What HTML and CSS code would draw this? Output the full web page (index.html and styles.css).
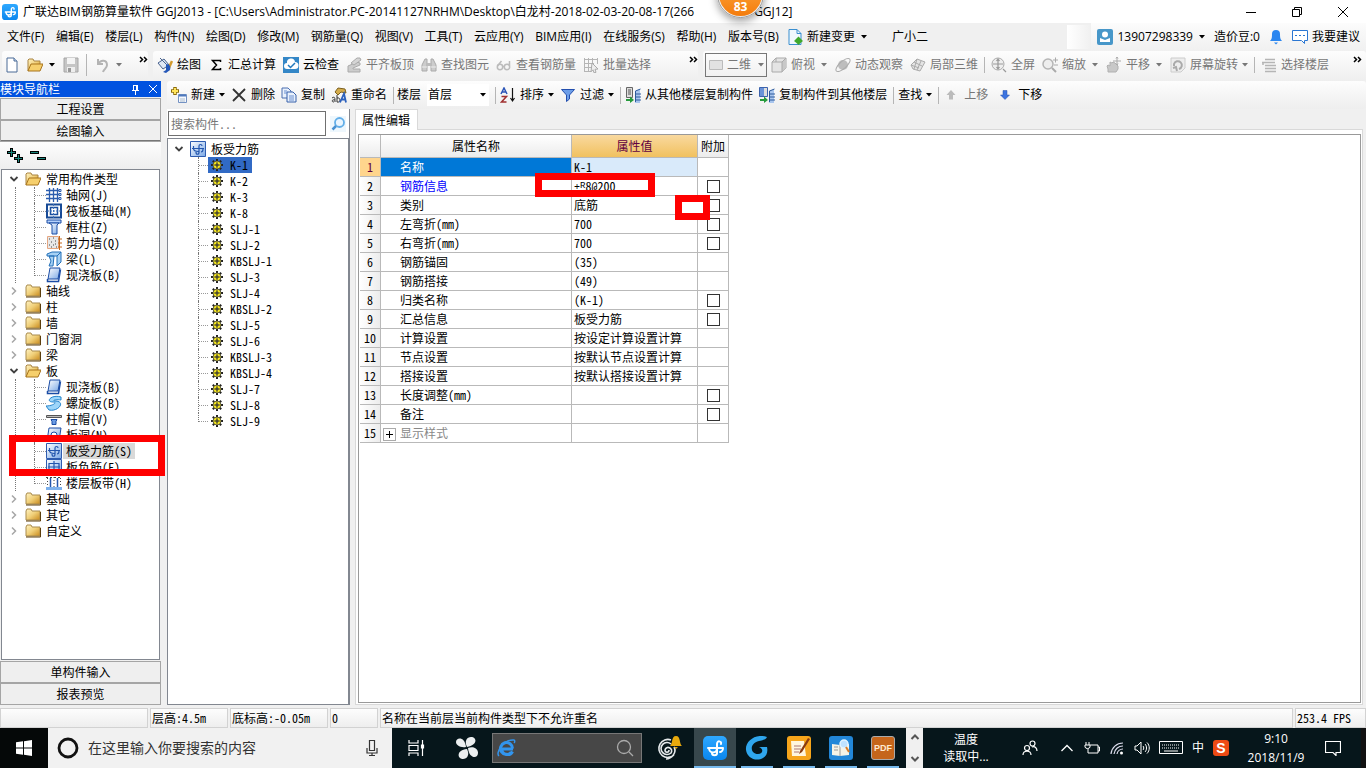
FILE: index.html
```html
<!DOCTYPE html>
<html lang="zh-CN">
<head>
<meta charset="utf-8">
<title>广联达BIM钢筋算量软件 GGJ2013</title>
<link rel="stylesheet" href="styles.css">
</head>
<body>
<svg class="sprite" aria-hidden="true">
  <defs>
    <linearGradient id="gold" x1="0" y1="0" x2="1" y2="1"><stop offset="0" stop-color="#fff3c4"/><stop offset=".5" stop-color="#f0cf78"/><stop offset="1" stop-color="#c98a1c"/></linearGradient>
    <linearGradient id="sky" x1="0" y1="0" x2="1" y2="1"><stop offset="0" stop-color="#fff"/><stop offset="1" stop-color="#7aa8e6"/></linearGradient>
    <linearGradient id="blue" x1="0" y1="0" x2="0" y2="1"><stop offset="0" stop-color="#2ea8ff"/><stop offset="1" stop-color="#0a86ee"/></linearGradient>
  </defs>
  <symbol id="caret" viewBox="0 0 6 4"><path d="M0 0h6L3 3.500z" fill="currentColor"/></symbol>
  <symbol id="more" viewBox="0 0 9 7"><path d="M1 1l2.500 2.500L1 6M5 1l2.500 2.500L5 6" fill="none" stroke="#000" stroke-width="1.500"/></symbol>
  <symbol id="logo" viewBox="0 0 24 24"><rect width="24" height="24" rx="5" fill="url(#blue)"/><path d="M9 17c0 3 5 3 5 0V8c0-4 5-3 4 0M5 12h15M6 12c0 6 8 6 8 0M20 12c0 3-2 4-3 4" fill="none" stroke="#fff" stroke-width="2" stroke-linecap="round"/></symbol>
  <symbol id="newdoc" viewBox="0 0 16 16"><path d="M3 1h7l3 3v11H3z" fill="#fff" stroke="#4b6a96"/><path d="M10 1v3h3" fill="#cfe0f5" stroke="#4b6a96"/></symbol>
  <symbol id="open" viewBox="0 0 16 16"><path d="M1 14V3l1-1h4l1 2h6v3" fill="url(#gold)" stroke="#a98443"/><path d="M1 14l3-7h12l-3 7z" fill="#f6cf6c" stroke="#a8741c"/></symbol>
  <symbol id="folder" viewBox="0 0 16 16"><path d="M1 13V4l1-2h4l1 2h8v9z" fill="url(#gold)" stroke="#a98b4d"/><path d="M1 14h14.500V5" fill="none" stroke="#5c3e0c"/></symbol>
  <symbol id="save" viewBox="0 0 16 16"><path d="M1 1h14v14H1z" fill="#c5c5c5" stroke="#a6a6a6"/><path d="M4 1h8v6H4z" fill="#f4f4f4"/><path d="M4 10h8v5H4z" fill="#eee"/><path d="M5 11h3v4H5z" fill="#999"/></symbol>
  <symbol id="undo" viewBox="0 0 16 16"><path d="M4 2v5h5" fill="none" stroke="#b4b4b4" stroke-width="2"/><path d="M4 7c3-5 9-4 9 1 0 3-3 4-4 7" fill="none" stroke="#b4b4b4" stroke-width="2"/></symbol>
  <symbol id="paint" viewBox="0 0 16 16"><path d="M1 6l6-4 5 6-6 4z" fill="#dfe8f4" stroke="#49628d"/><path d="M3 1l6 6" stroke="#49628d"/><path d="M15 4l-4 9" stroke="#d39a2d" stroke-width="2.500"/><path d="M9 7c4 0 5 3 4 6l-4 3-3-1 3-2z" fill="#2457b8"/></symbol>
  <symbol id="sigma" viewBox="0 0 16 16"><path d="M12.500 5V3.500H4.500l4 4.500-4 4.500h8V11" fill="none" stroke="#000" stroke-width="1.500"/></symbol>
  <symbol id="cloudcheck" viewBox="0 0 16 16"><rect width="16" height="16" fill="#3487c7"/><path d="M4 12a3 3 0 0 1 0-6 4 4 0 0 1 8-1 3.500 3.500 0 0 1 0 7z" fill="#fff"/><path d="M5 8l2.500 2.500L12 6" fill="none" stroke="#2479bc" stroke-width="1.500"/></symbol>
  <symbol id="g-align" viewBox="0 0 16 16"><path d="M2 14V9l9-4 3 1v2l-7 3v1h7v3H2z" fill="#ccc" stroke="#aaa"/><path d="M5 6l6-5h3l1 2-7 5z" fill="#d5d5d5" stroke="#aaa"/></symbol>
  <symbol id="g-find" viewBox="0 0 16 16"><path d="M1 14V8l3-6h2v12zM10 14V2h2l3 6v6z" fill="#ccc" stroke="#aaa"/><path d="M6 6h4v3H6z" fill="#bbb"/><path d="M1 10h5M10 10h5" stroke="#eee"/></symbol>
  <symbol id="g-glasses" viewBox="0 0 16 16"><g fill="none" stroke="#bbb" stroke-width="1.500"><circle cx="4" cy="10" r="2.700"/><circle cx="11" cy="10" r="2.700"/><path d="M1.500 9l4-5M13.500 9V4M6.700 9.500h1.600"/></g></symbol>
  <symbol id="g-batch" viewBox="0 0 16 16"><path d="M1.500 1v13M5.500 1v13M9.500 1v7M1 2.500h14M1 6.500h10M1 10.500h7M1 14.500h7M14.500 1v6" stroke="#b5b5b5" fill="none"/><path d="M9 6l6 6-3 .3 1 3-2 .5-1-3-2 2z" fill="#eee" stroke="#aaa"/></symbol>
  <symbol id="g-plane" viewBox="0 0 16 16"><path d="M1.500 3.500h13v9h-13z" fill="#e2e2e2" stroke="#bbb"/></symbol>
  <symbol id="g-cube" viewBox="0 0 16 16"><path d="M1 5l4-4h10v10l-4 4H1z" fill="#e4e4e4" stroke="#aaa"/><path d="M11 5l4-4v10l-4 4z" fill="#c8c8c8"/><path d="M1 5h10v10M11 5l4-4M5 1v4" fill="none" stroke="#aaa"/></symbol>
  <symbol id="g-orbit" viewBox="0 0 16 16"><circle cx="8" cy="8" r="5" fill="#bdbdbd"/><ellipse cx="8" cy="8" rx="9" ry="3.500" transform="rotate(-42 8 8)" fill="none" stroke="#aaa"/></symbol>
  <symbol id="g-part" viewBox="0 0 16 16"><path d="M1 8l6-6 8 3-5 9-7-2z" fill="#e4e4e4" stroke="#aaa"/><path d="M4 5l8 4M7 2l-3 10M11 4L7 13M1 8l8 3" stroke="#aaa" fill="none"/></symbol>
  <symbol id="g-full" viewBox="0 0 16 16"><circle cx="7" cy="7" r="6" fill="#eee" stroke="#aaa"/><path d="M7 2v10M2 7h10M5.500 4L7 2l1.500 2M5.500 10L7 12l1.500-2M12 12l3 3" fill="none" stroke="#999" stroke-width="1.200"/></symbol>
  <symbol id="g-zoom" viewBox="0 0 16 16"><circle cx="6" cy="7" r="5" fill="#eee" stroke="#b5b5b5" stroke-width="1.500"/><path d="M10 11l4 4" stroke="#aaa" stroke-width="2"/><path d="M11 3h5M13.500.500v5M12 8h4" stroke="#aaa"/></symbol>
  <symbol id="g-pan" viewBox="0 0 16 16"><path d="M2 15v-3L1 9l1-1 2 1V5l2 1 1-1 2 1 2 2 1 1v3l-2 3z" fill="#c8c8c8" stroke="#b0b0b0"/><path d="M11 0v8M7 4h8M10 1.500L11 0l1 1.500M10 6.500L11 8l1-1.500" fill="none" stroke="#aaa"/></symbol>
  <symbol id="g-rotate" viewBox="0 0 16 16"><path d="M1 1h14v10l-4 4H1z" fill="#ededed" stroke="#ccc"/><path d="M4 9V7a4 4 0 1 1 5 5M3 11l3-1 1 4" fill="none" stroke="#aaa" stroke-width="2"/></symbol>
  <symbol id="g-floor" viewBox="0 0 16 16"><path d="M4 2.500h10M1 5.500h13M4 8.500h11M4 11.500h11M4 14.500h11M2 6v2" stroke="#b5b5b5" stroke-width="1.500" fill="none"/></symbol>
  <symbol id="change" viewBox="0 0 16 16"><path d="M2 .500h8l4 4v11H2z" fill="#f1f8fd" stroke="#3a8fd0"/><path d="M10 .500v4h4" fill="none" stroke="#3a8fd0"/><path d="M11.500 7.500l2 2 2.500 2.500-2.500 2-2 2-2-2L7 12l2.500-2.500z" fill="#3fa92c"/></symbol>
  <symbol id="user" viewBox="0 0 16 16"><rect width="16" height="16" rx="2" fill="#4797c9"/><circle cx="8" cy="5.500" r="3" fill="#fff"/><path d="M3 13V9l5 2 5-2v4z" fill="#fff"/></symbol>
  <symbol id="bell" viewBox="0 0 14 16"><path d="M1 12c2-2 2-4 2-7a4 4 0 0 1 8 0c0 3 0 5 2 7z" fill="#2a86f0"/><path d="M5 13.500h4L7 15.500z" fill="#2a86f0"/></symbol>
  <symbol id="chat" viewBox="0 0 16 16"><path d="M.500 1.500h15v10h-3v3l-3-3h-9z" fill="#fff" stroke="#2a76d2"/><path d="M3 6.500h2M7 6.500h2M11 6.500h2" stroke="#2a76d2"/></symbol>
  <symbol id="addnode" viewBox="0 0 16 16"><path d="M4 0v8M0 4h8" stroke="#8c6c08" stroke-width="3.500"/><path d="M4 1v6M1 4h6" stroke="#ffe45c" stroke-width="2"/><path d="M7.500 7.500h8v8h-8z" fill="#f6f9ff" stroke="#7391c2"/><path d="M8 8.500h7" stroke="#4e78bd" stroke-width="2"/><path d="M9 12h5M9 14h5" stroke="#abc"/></symbol>
  <symbol id="del" viewBox="0 0 16 16"><path d="M2 2l12 12M14 2L2 14" stroke="#333" stroke-width="1.800" fill="none"/></symbol>
  <symbol id="copy" viewBox="0 0 16 16"><path d="M1 1h6l3 3v7H1z" fill="#e9f1fc" stroke="#4a6fb0"/><path d="M6 5h6l3 3v7H6z" fill="#e9f1fc" stroke="#3760ab"/><path d="M8 9h5M8 11h5M8 13h5M3 4h3M3 6h3" stroke="#6a8fd0"/></symbol>
  <symbol id="rename" viewBox="0 0 16 16"><path d="M4 5l3-4 7 1 1 4-5-1-3 3z" fill="#d4ac4b" stroke="#7c6020"/><path d="M1 11c3-2 3 0 3 4M4 13c-3-1-4 2-1 2M6 8v7c4 1 4-5 0-4" fill="none" stroke="#333"/><path d="M9 15.500l4-9 2 9M10.500 12.500h4" fill="none" stroke="#2c61bd" stroke-width="1.800"/></symbol>
  <symbol id="sort" viewBox="0 0 16 16"><path d="M1 7l3-6 3 6M2 5h4" fill="none" stroke="#2b54b8" stroke-width="1.500"/><path d="M1.500 9.500h5l-5 5.500h5" fill="none" stroke="#a03030" stroke-width="1.500"/><path d="M12.500 1v12M10.500 11l2 3 2-3" fill="none" stroke="#111" stroke-width="1.200"/></symbol>
  <symbol id="filter" viewBox="0 0 16 16"><path d="M1.500 2.500h13L9.500 8v4l-3 2.500V8z" fill="#6d9ee8" stroke="#234fae"/></symbol>
  <symbol id="fromfloor" viewBox="0 0 16 16"><path d="M1.500.500h6v10h-6z" fill="#ddd" stroke="#666"/><path d="M3 3h3M3 5h3M3 7h3" stroke="#555"/><path d="M1 12h4V9.500l4 3.500-4 3v-2H1z" fill="#259a3b"/><path d="M10 16V4l5-2v14z" fill="#a9c6ee"/><path d="M10.500 15V4l5-2M11 7h5M11 10h5M11 13h5" fill="none" stroke="#2e5a9c"/></symbol>
  <symbol id="tofloor" viewBox="0 0 16 16"><path d="M.500.500h8v9h-8z" fill="#6993d8" stroke="#3c63ad"/><path d="M5 1h3v8H5z" fill="#ddd"/><path d="M1 12h4V9.500l4 3.500-4 3v-2H1z" fill="#259a3b"/><path d="M10 16V4l5-2v14z" fill="#a9c6ee"/><path d="M10.500 15V4l5-2M11 7h5M11 10h5M11 13h5" fill="none" stroke="#2e5a9c"/></symbol>
  <symbol id="up" viewBox="0 0 10 10"><path d="M5 0l4.500 5H7v4.500H3V5H.500z" fill="#bbb"/></symbol>
  <symbol id="down" viewBox="0 0 10 10"><path d="M5 9.500L.500 5H3V.500h4V5h2.500z" fill="#3d74e0" stroke="#2450a8" stroke-width=".500"/></symbol>
  <symbol id="glass" viewBox="0 0 16 16"><rect width="16" height="16" fill="#eef7fd"/><circle cx="9.500" cy="6.500" r="4.500" fill="#e9f5ff" stroke="#62aee8" stroke-width="1.800"/><path d="M6 10l-3.500 3.500" stroke="#4790d2" stroke-width="2.500"/></symbol>
  <symbol id="opened" viewBox="0 0 12 12"><path d="M2.500 4l3.500 3.500L9.500 4" fill="none" stroke="#404040" stroke-width="1.800"/></symbol>
  <symbol id="closed" viewBox="0 0 12 12"><path d="M4 2.500L7.500 6 4 9.500" fill="none" stroke="#a6a6a6" stroke-width="1.500"/></symbol>
  <symbol id="plusplus" viewBox="0 0 16 16"><path d="M4.500 0v9M0 4.500h9M11.500 6v9M7 10.500h9" stroke="#000" stroke-width="3"/><path d="M4.500 1v7M1 4.500h7M11.500 7v7M8 10.500h7" stroke="#19847a"/></symbol>
  <symbol id="minusminus" viewBox="0 0 16 16"><path d="M0 4.500h9M7 10.500h9" stroke="#000" stroke-width="3"/><path d="M1 4.500h7M8 10.500h7" stroke="#19847a"/></symbol>
  <symbol id="t-axis" viewBox="0 0 16 16"><path d="M3.500 1v14M7.500 1v14M11.500 1v14M0 3.500h13M0 7.500h13M0 11.500h13" stroke="#2a5cae" stroke-width="1.300"/><path d="M13 2.500h2v2h-2zM13 6.500h2v2h-2zM13 10.500h2v2h-2z" fill="#fff" stroke="#2a5cae"/></symbol>
  <symbol id="t-raft" viewBox="0 0 16 16"><path d="M1 1.500h14v13H1z" fill="#fff" stroke="#174a96" stroke-width="2"/><path d="M4.500 4.500h7v7h-7z" fill="#fff" stroke="#1a4f9f" stroke-width="1.500"/><path d="M7.500 1v14M1 8h14" stroke="#3f70b8" stroke-dasharray="2 1"/></symbol>
  <symbol id="t-col" viewBox="0 0 16 16"><path d="M1 1h14v3H1z" fill="#b5d1fb" stroke="#1d4ea6"/><path d="M3 4h10l-2 2v9H6V6z" fill="url(#sky)" stroke="#1d4ea6"/></symbol>
  <symbol id="t-wall" viewBox="0 0 16 16"><path d="M1.500 1.500h11v12h-11z" fill="#e8e8e8" stroke="#e4a681"/><path d="M3 4h1M7 3h1M5 7h1M9 6h1M3 10h1M7 10h1M5 12h1M10 12h1M9 9h1" stroke="#444"/><path d="M13.500 1v14M12 4h4M12 8h4M12 12h4" stroke="#c4691d"/></symbol>
  <symbol id="t-beam" viewBox="0 0 16 16"><path d="M1 3l5-2h9l-4 4H1zM3 5h5l-1 10H3l2-5zM11 5l4-4v10l-4 4z" fill="#a7d2f5" stroke="#2470b8"/></symbol>
  <symbol id="t-slab" viewBox="0 0 16 16"><path d="M4 1h10l-2 11H2z" fill="url(#sky)" stroke="#1b4ca5"/><path d="M1.500 12v2.500h11l2-12" fill="none" stroke="#1b4ca5" stroke-width="1.500"/></symbol>
  <symbol id="t-spiral" viewBox="0 0 16 16"><path d="M15 2C5-1-1 7 7 7c5 0 0 4-7 4l3 4c9 2 17-8 7-9-5 0-1-2 5-1z" fill="#9dd6fa" stroke="#2383cb"/></symbol>
  <symbol id="t-cap" viewBox="0 0 16 16"><path d="M.500 4.500h15v2H.500z" fill="#bbb" stroke="#555"/><path d="M5 8.500h6l-1 2v3H6v-3z" fill="#6b9ce4" stroke="#1b4ca5"/></symbol>
  <symbol id="t-hole" viewBox="0 0 16 16"><path d="M3 1h12l-2 13H1z" fill="url(#sky)" stroke="#1b4ca5"/><circle cx="8" cy="8" r="3" fill="#fff" stroke="#1b4ca5"/></symbol>
  <symbol id="t-rebar" viewBox="0 0 16 16"><path d="M.500.500h15v15H.500z" fill="url(#sky)" stroke="#2e5cb0"/><path d="M2 7.500h12M6 11c0 3 3 3 3 0V5c0-2 3-2 3 0M3.500 5v2.500c0 3 3 3 5 3M13 8c0 2-1 3-2 3" fill="none" stroke="#2356ae" stroke-width="1.200"/></symbol>
  <symbol id="t-neg" viewBox="0 0 16 16"><path d="M.500.500h15v15H.500z" fill="url(#sky)" stroke="#2e5cb0"/><path d="M2 8h12M3 4.500h10v7H3zM8 2v12" fill="none" stroke="#2356ae" stroke-width="1.200"/></symbol>
  <symbol id="t-strip" viewBox="0 0 16 16"><path d="M0 12h16v3H0z" fill="#7db1ed"/><path d="M0 2.500h16" stroke="#444" stroke-dasharray="2 2"/><path d="M4.500 3v9M11.500 3v9" stroke="#2356ae" stroke-width="1.500"/><path d="M8 2v10M1.500 3v9M14.500 3v9" stroke="#444" stroke-dasharray="1 2"/></symbol>
  <symbol id="gear" viewBox="0 0 12 12"><path d="M6 0v12M0 6h12M1.800 1.800l8.400 8.400M10.200 1.800l-8.400 8.400" stroke="#222" stroke-width="2"/><circle cx="6" cy="6" r="4" fill="#f3e51c" stroke="#444" stroke-width=".800"/><path d="M6 3v6M3 6h6M5 5h2v2H5z" fill="#f3e51c" stroke="#333" stroke-width=".800"/></symbol>
</svg>

<header class="title-bar">
  <svg class="i16"><use href="#logo"/></svg>
  <h1 class="title-text"><span>广联达BIM钢筋算量软件 GGJ2013 - [C:\Users\Administrator.PC-20141127NRHM\Desktop\白龙村-2018-02-03-20-08-17(266</span><span>GGJ12]</span></h1>
  <div class="window-buttons">
    <button aria-label="最小化"><svg class="i12" viewBox="0 0 12 12"><path d="M1 6.500h10" stroke="#000"/></svg></button>
    <button aria-label="还原"><svg class="i12" viewBox="0 0 12 12"><path d="M1.500 3.500h7v7h-7zM3.500 3V1.500h7v7H9" fill="none" stroke="#000"/></svg></button>
    <button aria-label="关闭"><svg class="i12" viewBox="0 0 12 12"><path d="M1 1l10 10M11 1L1 11" stroke="#000"/></svg></button>
  </div>
  <div class="score-ball">83</div>
</header>

<nav class="menu-bar">
  <div class="menus">
    <button>文件(F)</button><button>编辑(E)</button><button>楼层(L)</button><button>构件(N)</button><button>绘图(D)</button><button>修改(M)</button><button>钢筋量(Q)</button><button>视图(V)</button><button>工具(T)</button><button>云应用(Y)</button><button>BIM应用(I)</button><button>在线服务(S)</button><button>帮助(H)</button><button>版本号(B)</button>
  </div>
  <button class="tool change"><svg class="i16"><use href="#change"/></svg>新建变更<svg class="caret"><use href="#caret"/></svg></button>
  <button class="assistant">广小二</button>
  <div class="account-edge"></div>
  <div class="account">
    <button class="tool"><svg class="i16"><use href="#user"/></svg>13907298339<svg class="caret"><use href="#caret"/></svg></button>
    <span>造价豆:0</span>
    <button class="tool" aria-label="通知"><svg class="i16"><use href="#bell"/></svg></button>
    <button class="tool feedback"><svg class="i16"><use href="#chat"/></svg>我要建议</button>
  </div>
</nav>

<div class="toolbar-row">
  <div class="band band-file">
    <button class="tool" aria-label="新建"><svg class="i16"><use href="#newdoc"/></svg></button>
    <button class="tool" aria-label="打开"><svg class="i16"><use href="#open"/></svg><svg class="caret"><use href="#caret"/></svg></button>
    <button class="tool" aria-label="保存"><svg class="i16"><use href="#save"/></svg></button>
    <span class="sep"></span>
    <button class="tool off" aria-label="撤销"><svg class="i16"><use href="#undo"/></svg><svg class="caret"><use href="#caret"/></svg></button>
    <svg class="more"><use href="#more"/></svg>
  </div>
  <div class="band band-draw">
    <button class="tool"><svg class="i16"><use href="#paint"/></svg>绘图</button>
    <button class="tool"><svg class="i16"><use href="#sigma"/></svg>汇总计算</button>
    <button class="tool"><svg class="i16"><use href="#cloudcheck"/></svg>云检查</button>
    <button class="tool off"><svg class="i16"><use href="#g-align"/></svg>平齐板顶</button>
    <button class="tool off"><svg class="i16"><use href="#g-find"/></svg>查找图元</button>
    <button class="tool off"><svg class="i16"><use href="#g-glasses"/></svg>查看钢筋量</button>
    <button class="tool off"><svg class="i16"><use href="#g-batch"/></svg>批量选择</button>
    <svg class="more"><use href="#more"/></svg>
  </div>
  <div class="band band-view">
    <button class="tool off boxed"><svg class="i16"><use href="#g-plane"/></svg>二维<svg class="caret"><use href="#caret"/></svg></button>
    <button class="tool off"><svg class="i16"><use href="#g-cube"/></svg>俯视<svg class="caret"><use href="#caret"/></svg></button>
    <button class="tool off"><svg class="i16"><use href="#g-orbit"/></svg>动态观察</button>
    <button class="tool off"><svg class="i16"><use href="#g-part"/></svg>局部三维</button>
    <span class="sep"></span>
    <button class="tool off"><svg class="i16"><use href="#g-full"/></svg>全屏</button>
    <button class="tool off"><svg class="i16"><use href="#g-zoom"/></svg>缩放<svg class="caret"><use href="#caret"/></svg></button>
    <button class="tool off"><svg class="i16"><use href="#g-pan"/></svg>平移<svg class="caret"><use href="#caret"/></svg></button>
    <button class="tool off tight"><svg class="i16"><use href="#g-rotate"/></svg>屏幕旋转<svg class="caret"><use href="#caret"/></svg></button>
    <span class="sep"></span>
    <button class="tool off"><svg class="i16"><use href="#g-floor"/></svg>选择楼层</button>
    <svg class="more"><use href="#more"/></svg>
  </div>
</div>

<main class="workspace">
  <aside class="nav-panel">
    <div class="nav-head"><h2>模块导航栏</h2>
      <button aria-label="固定"><svg class="i12" viewBox="0 0 12 12"><path d="M4 2.500h5M4.500 2v5M8.500 2v5M7.500 2v5M3 7.500h7M6.500 8v4" stroke="#fff" fill="none"/></svg></button>
      <button aria-label="关闭"><svg class="i12" viewBox="0 0 12 12"><path d="M2 2l8 8M10 2l-8 8" stroke="#fff"/></svg></button>
    </div>
    <button class="section">工程设置</button>
    <button class="section pressed">绘图输入</button>
    <div class="nav-tools">
      <button aria-label="展开"><svg class="i16"><use href="#plusplus"/></svg></button>
      <button aria-label="折叠"><svg class="i16"><use href="#minusminus"/></svg></button>
    </div>
    <div class="nav-tree">
      <ul class="tree">
        <li><div class="node"><svg class="tw"><use href="#opened"/></svg><svg class="i16"><use href="#open"/></svg>常用构件类型</div>
          <ul class="sub">
            <li><svg class="i16"><use href="#t-axis"/></svg><span>轴网(J)</span></li>
            <li><svg class="i16"><use href="#t-raft"/></svg><span>筏板基础(M)</span></li>
            <li><svg class="i16"><use href="#t-col"/></svg><span>框柱(Z)</span></li>
            <li><svg class="i16"><use href="#t-wall"/></svg><span>剪力墙(Q)</span></li>
            <li><svg class="i16"><use href="#t-beam"/></svg><span>梁(L)</span></li>
            <li><svg class="i16"><use href="#t-slab"/></svg><span>现浇板(B)</span></li>
          </ul></li>
        <li><div class="node"><svg class="tw"><use href="#closed"/></svg><svg class="i16"><use href="#folder"/></svg>轴线</div></li>
        <li><div class="node"><svg class="tw"><use href="#closed"/></svg><svg class="i16"><use href="#folder"/></svg>柱</div></li>
        <li><div class="node"><svg class="tw"><use href="#closed"/></svg><svg class="i16"><use href="#folder"/></svg>墙</div></li>
        <li><div class="node"><svg class="tw"><use href="#closed"/></svg><svg class="i16"><use href="#folder"/></svg>门窗洞</div></li>
        <li><div class="node"><svg class="tw"><use href="#closed"/></svg><svg class="i16"><use href="#folder"/></svg>梁</div></li>
        <li><div class="node"><svg class="tw"><use href="#opened"/></svg><svg class="i16"><use href="#open"/></svg>板</div>
          <ul class="sub">
            <li><svg class="i16"><use href="#t-slab"/></svg><span>现浇板(B)</span></li>
            <li><svg class="i16"><use href="#t-spiral"/></svg><span>螺旋板(B)</span></li>
            <li><svg class="i16"><use href="#t-cap"/></svg><span>柱帽(V)</span></li>
            <li><svg class="i16"><use href="#t-hole"/></svg><span>板洞(N)</span></li>
            <li class="current"><svg class="i16"><use href="#t-rebar"/></svg><span>板受力筋(S)</span><i class="mark mark-nav"></i></li>
            <li><svg class="i16"><use href="#t-neg"/></svg><span>板负筋(F)</span></li>
            <li><svg class="i16"><use href="#t-strip"/></svg><span>楼层板带(H)</span></li>
          </ul></li>
        <li><div class="node"><svg class="tw"><use href="#closed"/></svg><svg class="i16"><use href="#folder"/></svg>基础</div></li>
        <li><div class="node"><svg class="tw"><use href="#closed"/></svg><svg class="i16"><use href="#folder"/></svg>其它</div></li>
        <li><div class="node"><svg class="tw"><use href="#closed"/></svg><svg class="i16"><use href="#folder"/></svg>自定义</div></li>
      </ul>
    </div>
    <button class="section">单构件输入</button>
    <button class="section">报表预览</button>
  </aside>

  <section class="editor">
    <div class="band band-edit">
      <button class="tool tight"><svg class="i16"><use href="#addnode"/></svg>新建<svg class="caret"><use href="#caret"/></svg></button>
      <button class="tool"><svg class="i16"><use href="#del"/></svg>删除</button>
      <button class="tool"><svg class="i16"><use href="#copy"/></svg>复制</button>
      <button class="tool"><svg class="i16"><use href="#rename"/></svg>重命名</button>
      <span class="sep"></span>
      <label class="floor" for="floor">楼层</label>
      <span class="combo"><select id="floor"><option>首层</option></select><svg class="caret"><use href="#caret"/></svg></span>
      <span class="sep"></span>
      <button class="tool tight"><svg class="i16"><use href="#sort"/></svg>排序<svg class="caret"><use href="#caret"/></svg></button>
      <button class="tool tight"><svg class="i16"><use href="#filter"/></svg>过滤<svg class="caret"><use href="#caret"/></svg></button>
      <span class="sep"></span>
      <button class="tool"><svg class="i16"><use href="#fromfloor"/></svg>从其他楼层复制构件</button>
      <button class="tool"><svg class="i16"><use href="#tofloor"/></svg>复制构件到其他楼层</button>
      <span class="sep"></span>
      <button class="tool tight">查找<svg class="caret"><use href="#caret"/></svg></button>
      <span class="sep"></span>
      <button class="tool off move"><svg class="i10"><use href="#up"/></svg>上移</button>
      <button class="tool move"><svg class="i10"><use href="#down"/></svg>下移</button>
    </div>
    <div class="panes">
      <div class="parts">
        <form class="search"><input type="text" aria-label="搜索构件" placeholder="搜索构件..."><button type="button" aria-label="搜索"><svg class="i16"><use href="#glass"/></svg></button></form>
        <div class="part-tree">
          <div class="node"><svg class="tw"><use href="#opened"/></svg><svg class="i16"><use href="#t-rebar"/></svg>板受力筋</div>
          <ul class="sub">
            <li class="selected"><b><svg class="i12"><use href="#gear"/></svg>K-1</b></li>
            <li><b><svg class="i12"><use href="#gear"/></svg>K-2</b></li>
            <li><b><svg class="i12"><use href="#gear"/></svg>K-3</b></li>
            <li><b><svg class="i12"><use href="#gear"/></svg>K-8</b></li>
            <li><b><svg class="i12"><use href="#gear"/></svg>SLJ-1</b></li>
            <li><b><svg class="i12"><use href="#gear"/></svg>SLJ-2</b></li>
            <li><b><svg class="i12"><use href="#gear"/></svg>KBSLJ-1</b></li>
            <li><b><svg class="i12"><use href="#gear"/></svg>SLJ-3</b></li>
            <li><b><svg class="i12"><use href="#gear"/></svg>SLJ-4</b></li>
            <li><b><svg class="i12"><use href="#gear"/></svg>KBSLJ-2</b></li>
            <li><b><svg class="i12"><use href="#gear"/></svg>SLJ-5</b></li>
            <li><b><svg class="i12"><use href="#gear"/></svg>SLJ-6</b></li>
            <li><b><svg class="i12"><use href="#gear"/></svg>KBSLJ-3</b></li>
            <li><b><svg class="i12"><use href="#gear"/></svg>KBSLJ-4</b></li>
            <li><b><svg class="i12"><use href="#gear"/></svg>SLJ-7</b></li>
            <li><b><svg class="i12"><use href="#gear"/></svg>SLJ-8</b></li>
            <li><b><svg class="i12"><use href="#gear"/></svg>SLJ-9</b></li>
          </ul>
        </div>
      </div>
      <div class="props">
        <button class="tab">属性编辑</button>
        <div class="props-outer"><div class="props-inner">
          <table class="grid">
            <colgroup><col class="c-no"><col class="c-name"><col class="c-value"><col class="c-add"></colgroup>
            <thead><tr><th></th><th>属性名称</th><th class="hot">属性值</th><th>附加</th></tr></thead>
            <tbody>
              <tr class="active"><th>1</th><td>名称</td><td>K-1</td><td></td></tr>
              <tr><th>2</th><td class="link">钢筋信息</td><td class="anchor"><span class="steel">±<sup>R</sup></span>8@200<i class="mark mark-info"></i></td><td><input type="checkbox" aria-label="附加 钢筋信息"></td></tr>
              <tr><th>3</th><td>类别</td><td class="anchor">底筋<i class="mark mark-drop"></i></td><td><input type="checkbox" aria-label="附加 类别"></td></tr>
              <tr><th>4</th><td>左弯折(mm)</td><td>700</td><td><input type="checkbox" aria-label="附加 左弯折"></td></tr>
              <tr><th>5</th><td>右弯折(mm)</td><td>700</td><td><input type="checkbox" aria-label="附加 右弯折"></td></tr>
              <tr><th>6</th><td>钢筋锚固</td><td>(35)</td><td></td></tr>
              <tr><th>7</th><td>钢筋搭接</td><td>(49)</td><td></td></tr>
              <tr><th>8</th><td>归类名称</td><td>(K-1)</td><td><input type="checkbox" aria-label="附加 归类名称"></td></tr>
              <tr><th>9</th><td>汇总信息</td><td>板受力筋</td><td><input type="checkbox" aria-label="附加 汇总信息"></td></tr>
              <tr><th>10</th><td>计算设置</td><td>按设定计算设置计算</td><td></td></tr>
              <tr><th>11</th><td>节点设置</td><td>按默认节点设置计算</td><td></td></tr>
              <tr><th>12</th><td>搭接设置</td><td>按默认搭接设置计算</td><td></td></tr>
              <tr><th>13</th><td>长度调整(mm)</td><td></td><td><input type="checkbox" aria-label="附加 长度调整"></td></tr>
              <tr><th>14</th><td>备注</td><td></td><td><input type="checkbox" aria-label="附加 备注"></td></tr>
              <tr><th>15</th><td class="group"><button aria-label="展开显示样式"><svg viewBox="0 0 11 11"><path d="M2 5.500h7M5.500 2v7" stroke="#000"/></svg></button>显示样式</td><td></td><td></td></tr>
            </tbody>
          </table>
        </div></div>
      </div>
    </div>
  </section>
</main>

<footer class="status">
  <span class="s-mode"></span><span class="s-height">层高:4.5m</span><span class="s-base">底标高:-0.05m</span><span class="s-count">0</span><span class="s-msg">名称在当前层当前构件类型下不允许重名</span><span class="s-fps">253.4 FPS</span>
</footer>

<div class="taskbar">
  <button class="start" aria-label="开始"><svg class="i16" viewBox="0 0 16 16"><path d="M0 2.300L7 1.300v6.200H0zM8 1.200L16 0v7.500H8zM0 8.500h7v6.200l-7-1zM8 8.500h8V16l-8-1.200z" fill="#fff"/></svg></button>
  <label class="cortana"><svg class="i24" viewBox="0 0 24 24"><circle cx="12" cy="12" r="9" fill="none" stroke="#111" stroke-width="2.800"/></svg><input type="text" placeholder="在这里输入你要搜索的内容" aria-label="搜索"><svg class="i16" viewBox="0 0 16 16"><path d="M5.500.500h5v10h-5zM3 8v5h10V8M8 13v3M5 15.500h6" fill="none" stroke="#333" stroke-width="1.200"/></svg></label>
  <div class="apps">
    <button class="app" aria-label="任务视图"><svg class="i20" viewBox="0 0 20 20"><path d="M3 2v3h9V2M3 18v-3h9v3M3 7.500h9v5H3zM16.500 2v16M15.500 7h2v3h-2z" fill="none" stroke="#fff" stroke-width="1.200"/></svg></button>
    <button class="app fan" aria-label="风扇"><svg class="i24" viewBox="0 0 24 24"><g fill="#eceff0"><path d="M11 11C5 12 1 9 1 6c0-5 9-6 10 5z"/><path d="M12 11c-3-6 0-10 4-10 6 0 7 8-4 10z"/><path d="M13 12c6-2 10 1 10 5 0 6-9 6-10-5z"/><path d="M12 13c3 6 0 10-4 10-6 0-7-9 4-10z"/></g></svg></button>
    <div class="ie"><svg class="i20" viewBox="0 0 20 20"><path d="M17 11H6M6 11a5.500 5 0 0 0 10.500 2.500M16.500 10.500a6 6 0 1 0-1.500 4" fill="none" stroke="#3295ee" stroke-width="3"/><path d="M3 18C-1 15 8 1 18 2c1 0 1 2 0 3" fill="none" stroke="#3295ee" stroke-width="1.500"/></svg><input type="text" aria-label="浏览器搜索"><svg class="i20" viewBox="0 0 20 20"><circle cx="9" cy="9" r="6.500" fill="none" stroke="#aaa" stroke-width="1.300"/><path d="M14 14l4 4" stroke="#aaa" stroke-width="1.300"/></svg></div>
    <button class="app" aria-label="提醒"><svg class="i28" viewBox="0 0 28 28"><path d="M16 6A9 9 0 1 0 19 21M16 10a6 6 0 1 0 0 9c3-5-5-8-6-3 0 3 4 3 4 0M19 13c3 5-2 12-8 12" fill="none" stroke="#e6eaec" stroke-width="1.600"/><path d="M15 12c3-2 1-10 6-10s3 8 6 10zM19 13h4l-2 2z" fill="#e8a90c"/></svg></button>
    <button class="app run now" aria-label="广联达"><svg class="i24"><use href="#logo"/></svg></button>
    <button class="app run" aria-label="浏览器"><svg class="i24" viewBox="0 0 24 24"><path d="M22 1C11-3 0 5 1 14c1 8 10 12 17 8 4-2 5-7 4-11h-8c5 2 4 7-1 7-8 0-9-11 1-13 3-1 7-1 8-4z" fill="#2fa6ed"/></svg></button>
    <button class="app run" aria-label="便笺"><svg class="i24" viewBox="0 0 24 24"><rect width="24" height="24" rx="3" fill="#f6a51b"/><path d="M4 5h13l2 15H5z" fill="#fff6dd"/><path d="M7 10h7M7 13h7M7 16h5" stroke="#a77"/><path d="M21 2l-8 13-1 3 3-2 8-13z" fill="#8a3b10"/></svg></button>
    <button class="app run" aria-label="阅读"><svg class="i24" viewBox="0 0 24 24"><rect width="24" height="24" rx="3" fill="#2287d8"/><path d="M3 8l8 1 9-1v11l-9 1-8-1z" fill="#f6f3e6"/><path d="M11 9v11M5 11h4M5 14h4" stroke="#999"/><circle cx="15" cy="8" r="4" fill="#bfe2ff" stroke="#e2f4ff" stroke-width="1.500"/><path d="M17 11l3 5" stroke="#d77b28" stroke-width="2"/></svg></button>
    <button class="app run" aria-label="PDF"><span class="pdf">PDF</span></button>
  </div>
  <div class="scroller"><svg class="i10"><path d="M1.500 7L5 3.500 8.500 7" fill="none" stroke="#555" stroke-width="2"/></svg><svg class="i10"><path d="M1.500 3L5 6.500 8.500 3" fill="none" stroke="#555" stroke-width="2"/></svg></div>
  <div class="temp"><span>温度</span><span>读取中...</span></div>
  <div class="tray">
    <svg class="i16 people" viewBox="0 0 16 16"><g fill="none" stroke="#fff" stroke-width="1.200"><circle cx="10.500" cy="3.500" r="2.500"/><circle cx="5" cy="8" r="2.500"/><path d="M1 15c0-5 8-5 8 0M10 7c3-1 5 1 5 4"/></g></svg>
    <svg class="i16" viewBox="0 0 16 16"><path d="M2.500 11L8 5.500l5.500 5.500" fill="none" stroke="#fff" stroke-width="1.300"/></svg>
    <svg class="i16" viewBox="0 0 16 16"><path d="M6 5h8v8H4V9M14 7h1.500v4H14M2 2v3M5 2v3M1 5h5v2c0 2-5 2-5 0z" fill="none" stroke="#fff"/></svg>
    <svg class="i16" viewBox="0 0 16 16"><path d="M2 14A12 12 0 0 1 14 3M5 14a9 9 0 0 1 9-8M8 14a6 6 0 0 1 6-5" fill="none" stroke="#dde" stroke-width="1.200"/><circle cx="12.500" cy="13" r="1.500" fill="#fff"/></svg>
    <svg class="i16" viewBox="0 0 16 16"><path d="M1 6h2l4-4v12l-4-4H1zM9 6c1 1 1 3 0 4M11 4c2 2 2 6 0 8M13 2.500c3 3 3 8 0 11" fill="none" stroke="#fff"/></svg>
    <svg class="keyboard" viewBox="0 0 24 14"><path d="M.500.500h23v12H.500z" fill="none" stroke="#fff"/><path d="M3 4h18M3 7h18" stroke="#fff" stroke-dasharray="1 1"/><path d="M5 10h14" stroke="#fff"/></svg>
    <span>中</span>
    <span class="sogou">S</span>
  </div>
  <div class="clock"><span>9:10</span><span>2018/11/9</span></div>
  <button class="notice" aria-label="操作中心"><svg class="i16" viewBox="0 0 16 16"><path d="M.500 1.500h15v11H11V15.500L8 12.500H.500z" fill="none" stroke="#fff" stroke-width="1.200"/></svg></button>
</div>
</body>
</html>
```

FILE: styles.css
```css
* { box-sizing: border-box; }
html, body { height: 100%; }
body {
  margin: 0;
  display: flex;
  flex-direction: column;
  min-height: 100vh;
  overflow: hidden;
  background: #f0f0f0;
  color: #000;
  font: 12px/16px "Open Sans", "Noto Sans CJK SC", sans-serif;
  white-space: nowrap;
}
button, input, select { font: inherit; color: inherit; margin: 0; padding: 0; border: 0; background: none; }
h1, h2 { margin: 0; font: inherit; }
ul { list-style: none; margin: 0; padding: 0; }
b, i { font: inherit; }
svg { flex: none; display: block; }
.sprite { position: absolute; width: 0; height: 0; }
.i10 { width: 10px; height: 10px; }
.i12 { width: 12px; height: 12px; }
.i16 { width: 16px; height: 16px; }
.i20 { width: 20px; height: 20px; }
.i24 { width: 24px; height: 24px; }
.i28 { width: 28px; height: 28px; }
.caret { width: 6px; height: 4px; }
.more { width: 9px; height: 7px; margin-left: auto; margin-bottom: 12px; }

/* title bar */
.title-bar { position: relative; display: flex; align-items: center; height: 23px; padding-left: 2px; gap: 5px; background: #fff; }
.title-text { flex: 1; display: flex; gap: 60px; }
.window-buttons { display: flex; }
.window-buttons button { width: 46px; height: 23px; display: flex; align-items: center; justify-content: center; }
.score-ball {
  position: absolute; left: 717px; top: -29px; z-index: 2;
  width: 47px; height: 47px; padding-top: 26px; border-radius: 50%;
  border: 2px solid #ececec; outline: 1px solid #999; outline-offset: -1px;
  background: linear-gradient(#ffb04a, #f47c0c);
  box-shadow: 0 3px 8px rgba(0, 0, 0, .4);
  color: #fff; font-weight: 700; text-align: center;
}

/* menu bar */
.menu-bar { display: flex; align-items: center; height: 28px; padding-left: 7px; }
.menus { display: flex; justify-content: space-between; width: 772px; }
.tool { display: flex; align-items: center; gap: 4px; height: 24px; }
.tool .caret { margin: 0 1px 0 2px; }
.tool.tight .caret { margin: 0; }
.change { margin-left: 8px; }
.assistant { margin-left: 24px; }
.account-edge { width: 24px; height: 24px; margin-left: auto; background: linear-gradient(90deg, #fff, #f0f0f0); }
.account { display: flex; align-items: center; gap: 8px; height: 28px; padding: 0 6px; background: linear-gradient(#fcfcfc, #f0f0f0); }

/* toolbars */
.toolbar-row { display: flex; gap: 5px; height: 30px; padding-left: 2px; }
.band { display: flex; align-items: center; gap: 7px; padding: 0 4px; border-radius: 3px; background: linear-gradient(#fdfdfd, #eee); }
.band-file { flex: none; width: 146px; padding: 0 0 2px 2px; }
.band-draw { flex: none; width: 545px; padding: 0 0 2px 4px; }
.band-view { flex: 1; padding: 0 4px 2px 2px; }
.sep { width: 1px; height: 22px; background: #b5b5b5; }
.band-view .sep { height: 16px; margin: 0 -1px; }
.off { color: #777; }
.boxed { width: 62px; margin-right: -3px; border: 1px solid #777; padding: 0 2px; gap: 3px; }
.boxed .caret { margin: 0 0 0 auto; }

.workspace { flex: 1; display: flex; gap: 6px; min-height: 0; }

/* module navigation */
.nav-panel { width: 161px; display: flex; flex-direction: column; font-family: "Noto Sans Mono CJK SC", "Noto Sans CJK SC", monospace; }
.nav-head { display: flex; align-items: center; gap: 6px; height: 16px; margin-bottom: 1px; padding-right: 2px; background: #0052e0; color: #fff; }
.nav-head h2 { flex: 1; }
.section { height: 22px; border: 1px solid #a5a5a5; border-top-color: #fff; border-left-color: #fff; outline: 1px solid #a5a5a5; outline-offset: -1px; background: #efefef; }
.section.pressed { border-bottom: 2px solid #777; }
.nav-tools { display: flex; align-items: center; gap: 7px; height: 27px; padding-left: 7px; background: linear-gradient(#fdfdfd, #eee); }
.nav-tree { flex: 1; margin: 0 1px 1px; padding: 1px 0 0 6px; border: 1px solid #828790; background: #fff; }
.node { display: flex; align-items: center; gap: 5px; height: 16px; }
.tw { width: 12px; height: 12px; }
.sub li { position: relative; display: flex; align-items: center; height: 16px; }
.sub li::before {
  content: ""; width: 11px; height: 16px; border-left: 1px dotted #777;
  background: repeating-linear-gradient(90deg, #999 0 1px, transparent 1px 2px) 0 8px / 100% 1px no-repeat;
}
.sub li:last-child::before { height: 9px; align-self: flex-start; }
.nav-tree .sub { margin-left: 7px; padding-left: 18px; border-left: 1px dotted #777; }
.nav-tree .sub span { margin-left: 1px; padding: 0 3px; }
.nav-tree .current > span { background: #d9d9d9; }

/* component editor */
.editor { flex: 1; display: flex; flex-direction: column; min-width: 0; }
.band-edit { height: 28px; gap: 6px; }
.band-edit .sep { margin-right: -2px; height: 17px; }
.floor { margin-left: -1px; }
.combo { display: flex; align-items: center; width: 62px; height: 22px; padding: 0 3px 0 1px; background: #fff; }
.combo select { flex: 1; appearance: none; }
.move { gap: 8px; padding: 0 3px; }
.panes { flex: 1; display: flex; gap: 5px; min-height: 0; }
.parts { width: 183px; display: flex; flex-direction: column; border-right: 1px solid #828790; font-family: "Noto Sans Mono CJK SC", "Noto Sans CJK SC", monospace; }
.search { display: flex; align-items: center; gap: 4px; height: 29px; padding: 1px 1px; background: #fff; }
.search input { width: 158px; height: 25px; padding: 0 2px; border: 1px solid #707070; background: #fff; }
.search input::placeholder { color: #777; opacity: 1; }
.part-tree { flex: 1; padding: 2px 0 0 5px; border: 1px solid #828790; background: #fff; }
.part-tree .sub { padding-left: 25px; }
.part-tree b { display: flex; align-items: center; gap: 7px; height: 16px; padding: 0 4px 0 3px; }
.part-tree .sub li::before { width: 9px; }
.part-tree .selected b { background: #316ac5; color: #000; }

/* property grid */
.props { flex: 1; display: flex; flex-direction: column; min-width: 0; font-family: "Noto Sans Mono CJK SC", "Noto Sans CJK SC", monospace; }
.tab { align-self: flex-start; z-index: 1; height: 21px; margin-bottom: -1px; padding: 0 7px 0 6px; border: 1px solid #d9d9d9; border-bottom: 0; background: #fff; }
.props-outer { flex: 1; display: flex; margin-right: 3px; padding: 4px 1px 1px 2px; border: 1px solid #d9d9d9; background: #fff; }
.props-inner { flex: 1; padding-left: 1px; border: 1px solid #999; }
.grid { table-layout: fixed; width: 369px; border-collapse: separate; border-spacing: 0; }
.c-no { width: 21px; } .c-name { width: 191px; } .c-value { width: 126px; } .c-add { width: 31px; }
.grid th, .grid td { height: 19px; padding: 0 0 0 2px; border: solid #b9b9b9; border-width: 0 1px 1px 0; font-weight: 400; text-align: left; line-height: 18px; }
.grid th { padding: 0; text-align: center; background: linear-gradient(90deg, #fff, #ececec); }
.grid thead th { height: 23px; background: linear-gradient(#fff, #ececec); }
.grid thead .hot { background: linear-gradient(#f9d99f, #f1c15f); color: #600040; }
.grid td:nth-child(2) { padding-left: 19px; }
.grid td:nth-child(4) { padding: 0; text-align: center; }
.grid .active th { background: #ffd58d; color: #600040; }
.grid .active td:nth-child(2) { background: #0078d7; color: #fff; }
.grid .active td:nth-child(3) { background: #d9eafa; }
.grid .link { color: #00f; }
.grid td.group { padding-left: 2px; color: #888; }
.group button { display: inline-block; vertical-align: middle; width: 13px; height: 13px; margin-right: 4px; border: 1px solid #aaa; }
.grid input { appearance: none; display: block; width: 13px; height: 13px; margin: 0 auto; border: 1px solid #333; background: #fff; }
.anchor { position: relative; }
.steel { font: 10px/12px "Liberation Mono", monospace; }
.steel sup { font-size: 9px; line-height: 0; vertical-align: 3px; }

/* red annotation frames */
.mark { position: absolute; z-index: 3; border: 7px solid #f00; }
.mark-nav { left: -25px; top: -8px; width: 156px; height: 41px; }
.mark-info { left: -37px; top: -4px; width: 120px; height: 24px; }
.mark-drop { left: 103px; top: -1px; width: 35px; height: 25px; background: #fff; }

/* status bar */
.status { display: flex; gap: 2px; height: 23px; padding: 3px 0 0; font-family: "Noto Sans Mono CJK SC", "Noto Sans CJK SC", monospace; }
.status span { height: 20px; padding: 0 1px; border: 1px solid #d2d2d2; line-height: 18px; background: linear-gradient(#fdfdfd, #eee); }
.s-mode { width: 148px; } .s-height { width: 78px; } .s-base { width: 98px; } .s-count { width: 48px; } .s-msg { flex: 1; } .s-fps { width: 71px; }

/* taskbar */
.taskbar { display: flex; height: 40px; background: #06161b; color: #fff; }
.start { width: 48px; display: flex; align-items: center; justify-content: center; background: #050808; }
.cortana { display: flex; align-items: center; gap: 8px; width: 344px; padding: 0 12px 0 8px; background: #f1f1f1; font-size: 14px; }
.cortana input { flex: 1; color: #333; }
.cortana input::placeholder { color: #333; opacity: 1; }
.apps { display: flex; flex: none; width: 514px; padding-left: 3px; }
.app { width: 42px; display: flex; align-items: center; justify-content: center; border-bottom: 2px solid transparent; border-top: 2px solid transparent; }
.fan { width: 55px; padding-left: 4px; }
.ie { display: flex; align-items: center; width: 150px; margin: 5px 6px 5px 0; padding: 0 6px 0 3px; border: 1px solid #777; background: #474747; }
.ie input { flex: 1; min-width: 0; }
.app.run { background: linear-gradient(#76b9ed, #76b9ed) center bottom / 32px 2px no-repeat; border-bottom: 0; padding-bottom: 2px; }
.app.now { margin-left: 4px; background: linear-gradient(#76b9ed, #76b9ed) center bottom / 42px 2px no-repeat #37474c; }
.pdf { width: 24px; height: 24px; border: 1px solid #aaa; border-radius: 3px; background: #c5651b; color: #ffe9cf; font: 700 9px/22px "Liberation Sans", sans-serif; }
.scroller { display: flex; flex-direction: column; justify-content: space-between; align-items: center; width: 17px; padding: 4px 0; background: #f0f0f0; }
.temp { display: flex; flex-direction: column; align-items: center; justify-content: center; width: 86px; line-height: 17px; }
.tray { flex: 1; display: flex; align-items: center; justify-content: space-between; padding: 0 17px 0 13px; }
.tray .people { margin-right: 12px; }
.keyboard { width: 24px; height: 14px; }
.sogou { width: 16px; height: 16px; border-radius: 3px; background: #ee4a14; text-align: center; font: 700 14px/16px "Liberation Sans", sans-serif; }
.clock { display: flex; flex-direction: column; align-items: center; justify-content: center; width: 60px; line-height: 19px; }
.notice { width: 60px; padding-left: 19px; border-right: 5px solid #111; }
```
